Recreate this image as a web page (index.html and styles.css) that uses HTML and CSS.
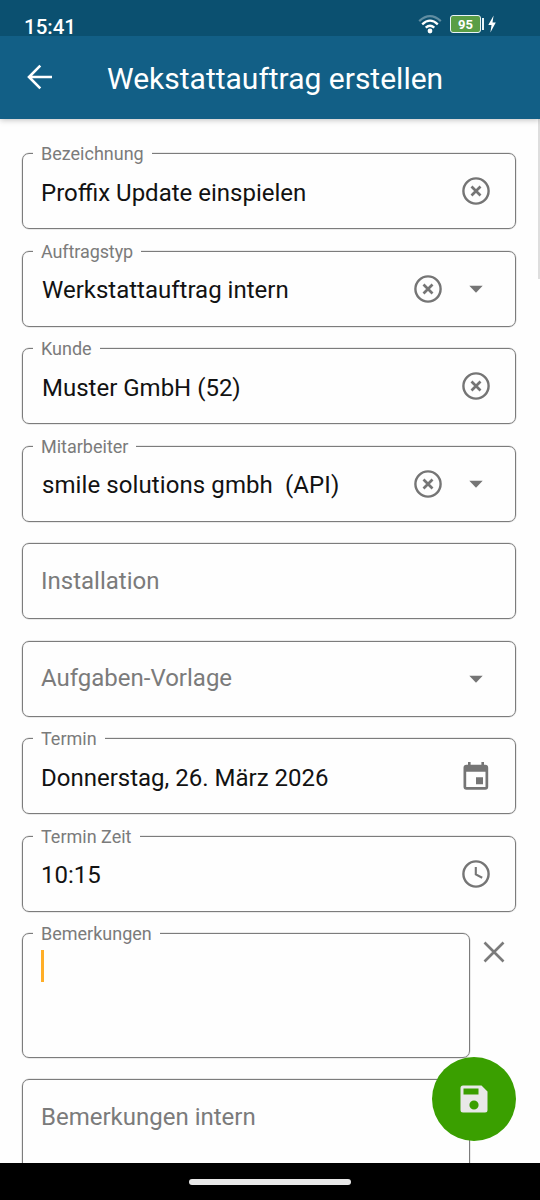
FILE: index.html
```html
<!DOCTYPE html>
<html lang="de">
<head>
<meta charset="utf-8">
<title>Wekstattauftrag erstellen</title>
<link rel="stylesheet" href="styles.css">
</head>
<body>
<svg class="defs" width="0" height="0">
  <symbol id="clear" viewBox="0 0 28 28"><circle cx="14" cy="14" r="12.6" fill="none" stroke="currentColor" stroke-width="2.4"/><path d="M9.5 9.5l9 9M18.5 9.5l-9 9" stroke="currentColor" stroke-width="2.7"/></symbol>
  <symbol id="caret" viewBox="0 0 28 28"><path d="M7.3 10.8h13.4L14 17.8z" fill="currentColor"/></symbol>
</svg>
<div class="screen">
  <header class="status">
    <span class="clock">15:41</span>
    <div class="indicators">
      <svg class="wifi" width="24" height="21" viewBox="0 0 24 21" fill="none" stroke="#fff" stroke-width="2.3"><path d="M1.2 7.1Q12-2.8 22.8 7.1" opacity=".35"/><path d="M4.2 10.3Q12 3 19.8 10.3"/><path d="M7.7 13.7Q12 9.8 16.3 13.7"/><circle cx="12" cy="17" r="2.4" fill="#fff" stroke="none"/></svg>
      <span class="battery">95</span><span class="battery-tip"></span>
      <svg class="bolt" width="8" height="18" viewBox="0 0 8 18"><path d="M5.6.5L.3 10h3.2l-1.1 7.5L7.8 7.5H4.5z" fill="#fff"/></svg>
    </div>
  </header>
  <div class="appbar">
    <svg class="back" width="26" height="26" viewBox="0 0 26 26" fill="none" stroke="#fff" stroke-width="2.6"><path d="M25 13H2.5M13.3 1.7L2 13l11.3 11.3"/></svg>
    <h1 class="title">Wekstattauftrag erstellen</h1>
  </div>
  <main class="form">
    <div class="field"><span class="label">Bezeichnung</span><span class="value">Proffix Update einspielen</span><svg class="icon"><use href="#clear"/></svg></div>
    <div class="field"><span class="label tight">Auftragstyp</span><span class="value picked">Werkstattauftrag intern</span><svg class="icon"><use href="#clear"/></svg><svg class="icon"><use href="#caret"/></svg></div>
    <div class="field"><span class="label">Kunde</span><span class="value picked">Muster GmbH (52)</span><svg class="icon"><use href="#clear"/></svg></div>
    <div class="field"><span class="label">Mitarbeiter</span><span class="value picked wide">smile solutions gmbh&nbsp; (API)</span><svg class="icon"><use href="#clear"/></svg><svg class="icon"><use href="#caret"/></svg></div>
    <div class="field"><span class="value hint">Installation</span></div>
    <div class="field"><span class="value hint">Aufgaben-Vorlage</span><svg class="icon"><use href="#caret"/></svg></div>
    <div class="field"><span class="label">Termin</span><span class="value">Donnerstag, 26. März 2026</span><svg class="icon" viewBox="0 0 28 28"><path fill="currentColor" fill-rule="evenodd" d="M6 0h2.6v2.8h10.8V0H22v2.8h1.2a3 3 0 0 1 3 3v18.9a3 3 0 0 1-3 3H4.5a3 3 0 0 1-3-3V5.8a3 3 0 0 1 3-3H6zM4.2 9.7v15.2h19.3V9.7zM14 15.3h7v7h-7z"/></svg></div>
    <div class="field"><span class="label">Termin Zeit</span><span class="value">10:15</span><svg class="icon" viewBox="0 0 28 28" fill="none" stroke="currentColor"><circle cx="14" cy="14" r="12.6" stroke-width="2.4"/><path d="M13.8 7v7.4l6.4 3.4" stroke-width="2.1"/></svg></div>
    <div class="row">
      <div class="field area"><span class="label">Bemerkungen</span><span class="caret"></span></div>
      <svg class="dismiss" width="22" height="22" viewBox="0 0 22 22"><path d="M1.5 1.5l19 19M20.5 1.5l-19 19" stroke="#7b7b7b" stroke-width="2.6"/></svg>
    </div>
    <div class="field area"><span class="value hint">Bemerkungen intern</span></div>
    <span class="scrollbar"></span>
  </main>
  <button class="fab" aria-label="Speichern"><svg width="28" height="28" viewBox="0 0 28 28"><path fill="#e8e8e8" fill-rule="evenodd" d="M3 .5h18.5l6 6V25a2.5 2.5 0 0 1-2.5 2.5H3A2.5 2.5 0 0 1 .5 25V3A2.5 2.5 0 0 1 3 .5zM3.5 3.5v6h15v-6zM14 15.4a4.6 4.6 0 1 0 0 9.2a4.6 4.6 0 0 0 0-9.2z"/></svg></button>
  <footer class="navbar"><span class="pill"></span></footer>
</div>
</body>
</html>
```
FILE: styles.css
```css
* { box-sizing: border-box; }
body { margin: 0; font-family: Roboto, sans-serif; }
.defs { position: absolute; }
.screen { position: relative; width: 540px; height: 1200px; overflow: hidden; display: flex; flex-direction: column; background: #fefefe; }

.status { flex: none; height: 36px; padding: 0 44px 0 24px; display: flex; justify-content: space-between; background: #0b5070; color: #fff; position: relative; z-index: 2; }
.clock { font-size: 20.5px; line-height: 24px; font-weight: 500; margin-top: 15px; }
.indicators { display: flex; align-items: flex-start; }
.wifi { margin: 14px 8px 0 0; }
.battery { width: 31px; height: 18px; margin-top: 15px; border: 1.5px solid #e8f3f7; border-radius: 3px; background: #5a9e45; font-size: 13px; line-height: 18px; font-weight: 700; text-align: center; }
.battery-tip { width: 2px; height: 12px; margin: 18px 4px 0 1px; background: #e8f3f7; }
.bolt { margin-top: 15px; }

.appbar { flex: none; height: 83px; padding-left: 27px; display: flex; align-items: center; background: #125f86; color: #fff; box-shadow: 0 1px 6px rgba(0,0,0,.25); z-index: 1; }
.back { margin-bottom: 2px; }
.title { margin: 2px 0 0 54px; font-size: 30px; line-height: 36px; font-weight: 400; }

.form { flex: 1; min-height: 0; overflow: hidden; position: relative; padding: 34px 24.5px 0 22px; display: flex; flex-direction: column; gap: 21.5px; color: #121212; }
.field { flex: none; position: relative; height: 76px; border: 1px solid #7c7c7c; border-radius: 7px; padding: 0 25px 0 18px; display: flex; align-items: center; gap: 20px; box-shadow: 0 0 0 .5px rgba(124,124,124,.3); }
.label { position: absolute; left: 10px; top: -11px; padding: 0 8px; background: #fefefe; color: #7b7b7b; font-size: 18px; line-height: 22px; }
.tight { letter-spacing: -.1px; }
.value { flex: 1; font-size: 24px; line-height: 30px; padding-top: 3px; white-space: nowrap; }
.picked { padding-left: 1px; }
.wide { letter-spacing: .09px; }
.hint { color: #7b7b7b; padding-top: 0; margin-top: -1px; }
.icon { flex: none; width: 28px; height: 28px; color: #757575; }
.row { display: flex; gap: 13px; }
.area { width: 448px; height: 124.5px; align-items: flex-start; padding-top: 16px; }
.area .hint { padding-top: 6px; margin-top: 0; }
.caret { width: 3px; height: 32px; background: #ffae27; }
.dismiss { margin-top: 8px; }
.scrollbar { position: absolute; right: 0; top: 0; width: 2px; height: 160px; background: #dedede; }

.fab { position: absolute; left: 432px; top: 1056.5px; width: 84px; height: 84px; border: 0; padding: 0; border-radius: 50%; display: grid; place-items: center; background: #3a9f00; z-index: 2; }
.navbar { flex: none; height: 37px; background: #000; display: flex; justify-content: center; align-items: center; }
.pill { width: 162px; height: 6px; border-radius: 3px; background: #e8e8e8; }
```
